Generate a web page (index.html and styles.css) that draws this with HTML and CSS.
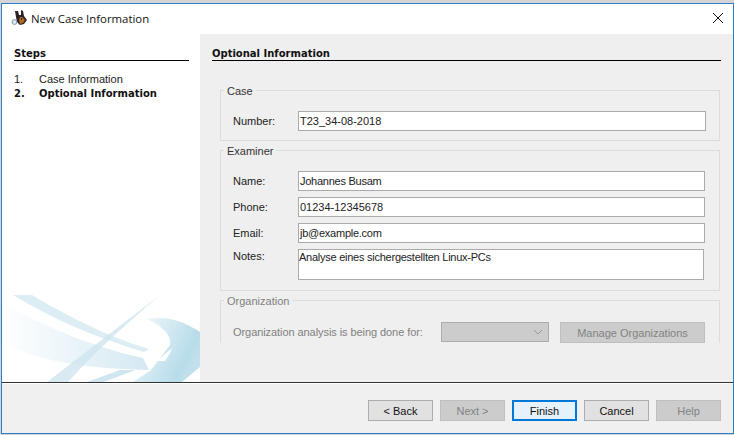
FILE: index.html
```html
<!DOCTYPE html>
<html lang="en">
<head>
    <meta charset="UTF-8">
    <title>New Case Information</title>
    <link rel="stylesheet" href="styles.css">
</head>
<body>
    <div class="window">
        <div class="titlebar">
            <svg class="app-icon" width="18" height="18" viewBox="0 0 18 18">
                <path d="M4 1 L7 1 L8 5 L10 5 L10 0 L12 1 L13 6 L16 10 L13 14 L9 15 L6 12 L5 7 Z" fill="#2a2226"/>
                <path d="M9 7 L11 7 L14 10 L12 13 L9 14 L8 10 Z" fill="#b8691f"/>
                <path d="M10 8 L11 8 L11 10 L10 10 Z" fill="#2a2226"/>
                <circle cx="3.5" cy="12" r="2.4" fill="#d8edf2" stroke="#7d9aa8"/>
            </svg>
            <span class="title">New Case Information</span>
            <svg class="close" width="12" height="12" viewBox="0 0 12 12">
                <path d="M1 1 L11 11 M11 1 L1 11" stroke="#111" stroke-width="1" fill="none"/>
            </svg>
        </div>

        <div class="main">
            <div class="steps">
                <h2>Steps</h2>
                <ol class="step-list">
                    <li><span class="num">1.</span>Case Information</li>
                    <li class="current"><span class="num">2.</span>Optional Information</li>
                </ol>
                <svg class="watermark" width="198" height="87" viewBox="0 0 198 87">
                    <defs>
                        <linearGradient id="fadeBand" x1="0" y1="0" x2="1" y2="0">
                            <stop offset="0" stop-color="#d4e9f2" stop-opacity="0"/>
                            <stop offset="1" stop-color="#d4e9f2"/>
                        </linearGradient>
                        <linearGradient id="swoosh" x1="0" y1="0.2" x2="1" y2="0.7">
                            <stop offset="0" stop-color="#f2f8fb"/>
                            <stop offset="0.8" stop-color="#b8dcea"/>
                            <stop offset="1" stop-color="#c4e1ec"/>
                        </linearGradient>
                    </defs>
                    <path d="M0 8 C40 30 90 52 141 63 L147 75 C95 74 35 68 0 47 Z" fill="url(#fadeBand)"/>
                    <path d="M11 0 L30 0 C60 18 105 42 147 54 L142 57 C95 43 50 24 11 0 Z" fill="#dcedf4"/>
                    <path d="M158 0 L45 87 L66 87 C95 55 125 28 158 0 Z" fill="#cfe5ef" fill-opacity="0.8"/>
                    <path d="M145 24 C168 20 184 28 198 37 L198 72 L180 87 L131 87 L149 75 L168 50 C170 40 160 31 145 24 Z" fill="url(#swoosh)"/>
                    <path d="M85 87 L118 75 L134 75 L102 87 Z" fill="#cfe5ef"/>
                    <path d="M102 87 L134 75 L146 75 L114 87 Z" fill="#fff"/>
                    <path d="M145 63 L168 46 L168 50 L154 63 Z M155 66 L170 53 L168 58 L163 66 Z" fill="#fff"/>
                </svg>
            </div>

            <div class="content">
                <h2>Optional Information</h2>
                <div class="form-clip">
                    <fieldset class="group">
                        <legend>Case</legend>
                        <div class="rows">
                            <label>Number:</label>
                            <div class="field">T23_34-08-2018</div>
                        </div>
                    </fieldset>

                    <fieldset class="group examiner">
                        <legend>Examiner</legend>
                        <div class="rows">
                            <label>Name:</label>
                            <div class="field narrow tight">Johannes Busam</div>
                            <label>Phone:</label>
                            <div class="field narrow">01234-12345678</div>
                            <label>Email:</label>
                            <div class="field narrow tight">jb@example.com</div>
                            <label class="top-label">Notes:</label>
                            <div class="field notes tight">Analyse eines sichergestellten Linux-PCs</div>
                        </div>
                    </fieldset>

                    <fieldset class="group disabled">
                        <legend>Organization</legend>
                        <div class="org-row">
                            <span class="org-label">Organization analysis is being done for:</span>
                            <div class="combo">
                                <svg width="10" height="6" viewBox="0 0 10 6">
                                    <path d="M1 1 L5 5 L9 1" stroke="#9a9a9a" fill="none"/>
                                </svg>
                            </div>
                            <button class="btn manage" disabled>Manage Organizations</button>
                        </div>
                    </fieldset>
                </div>
            </div>
        </div>

        <div class="footer">
            <button class="btn">&lt; Back</button>
            <button class="btn" disabled>Next &gt;</button>
            <button class="btn default">Finish</button>
            <button class="btn">Cancel</button>
            <button class="btn" disabled>Help</button>
        </div>
    </div>
</body>
</html>
```

FILE: styles.css
```css
html, body {
    margin: 0;
    height: 100%;
}

body {
    background: #d4d4d4;
    font-family: "Liberation Sans", sans-serif;
    font-size: 11px;
    color: #222;
    overflow: hidden;
}

.window {
    box-sizing: border-box;
    width: 733px;
    height: 431px;
    margin: 3px 0 0 1px;
    border: 1px solid #2b7fc9;
    background: #fff;
    display: flex;
    flex-direction: column;
}

.titlebar {
    height: 30px;
    display: flex;
    align-items: center;
    flex-shrink: 0;
}

.app-icon {
    margin-left: 9px;
}

.title {
    margin: 0 0 2px 2px;
    font-family: "Open Sans", sans-serif;
    font-size: 11.4px;
    color: #111;
}

.close {
    margin: 0 9px 2px auto;
}

.main {
    flex: 1;
    display: flex;
    min-height: 0;
}

h2 {
    margin: 0;
    font-family: "DejaVu Sans", sans-serif;
    font-size: 10px;
    font-weight: bold;
    line-height: 12px;
    color: #111;
    border-bottom: 1px solid #000;
    padding: 14px 0 0;
}

.steps {
    position: relative;
    width: 198px;
    flex-shrink: 0;
    box-sizing: border-box;
    padding: 0 11px 0 12px;
}

.step-list {
    list-style: none;
    margin: 11px 0 0;
    padding: 0;
}

.step-list li {
    line-height: 14px;
    display: flex;
}

.step-list .current {
    font-family: "DejaVu Sans", sans-serif;
    font-size: 10px;
    font-weight: bold;
    color: #111;
    padding-top: 1px;
}

.num {
    width: 25px;
}

.watermark {
    position: absolute;
    left: 0;
    bottom: 0;
}

.content {
    flex: 1;
    background: #efefef;
    padding: 0 12px 0 12px;
    min-width: 0;
}

.form-clip {
    height: 260px;
    margin: 22px 1px 0 8px;
    overflow: hidden;
}

.group {
    margin: 0 0 2px;
    padding: 14px 13px 9px 12px;
    border: 1px solid #dcdcdc;
    min-width: 0;
}

.examiner {
    padding-bottom: 10px;
}

.group legend {
    padding: 2px 3px 0;
    margin-left: -9px;
    line-height: 12px;
    color: #333;
}

.rows {
    display: grid;
    grid-template-columns: 65px 1fr;
    row-gap: 6px;
    align-items: center;
}

.field {
    box-sizing: border-box;
    height: 20px;
    background: #fff;
    border: 1px solid #ababab;
    padding: 0 1px;
    line-height: 18px;
    color: #222;
}

.tight {
    letter-spacing: -0.25px;
}

.narrow {
    margin-right: 1px;
}

.notes {
    height: 31px;
    margin-right: 2px;
    padding: 0;
    line-height: 14px;
    align-self: start;
}

.top-label {
    align-self: start;
    padding-top: 1px;
}

.disabled legend,
.disabled .org-label {
    color: #808080;
}

.disabled {
    padding-top: 15px;
}

.org-row {
    display: flex;
    align-items: flex-start;
}

.org-label {
    width: 208px;
    line-height: 20px;
    letter-spacing: -0.07px;
}

.combo {
    box-sizing: border-box;
    width: 108px;
    height: 20px;
    background: #ccc;
    border: 1px solid #adadad;
    display: flex;
    align-items: center;
    justify-content: flex-end;
    padding-right: 5px;
}

.btn {
    box-sizing: border-box;
    width: 65px;
    height: 21px;
    padding: 0;
    background: #e1e1e1;
    border: 1px solid #adadad;
    font-family: inherit;
    font-size: 11px;
    color: #111;
}

.btn:disabled {
    background: #ccc;
    border-color: #bfbfbf;
    color: #838383;
}

.manage {
    width: 145px;
    margin-left: 11px;
}

.footer {
    height: 51px;
    flex-shrink: 0;
    box-sizing: border-box;
    background: #f0f0f0;
    border-top: 1px solid #333;
    box-shadow: inset 0 1px 0 #fff;
    display: flex;
    justify-content: flex-end;
    gap: 7px;
    padding: 17px 12px 0 0;
}

.default {
    background: #e5f1fb;
    border-color: #0078d7;
    border-width: 2px;
}
```
